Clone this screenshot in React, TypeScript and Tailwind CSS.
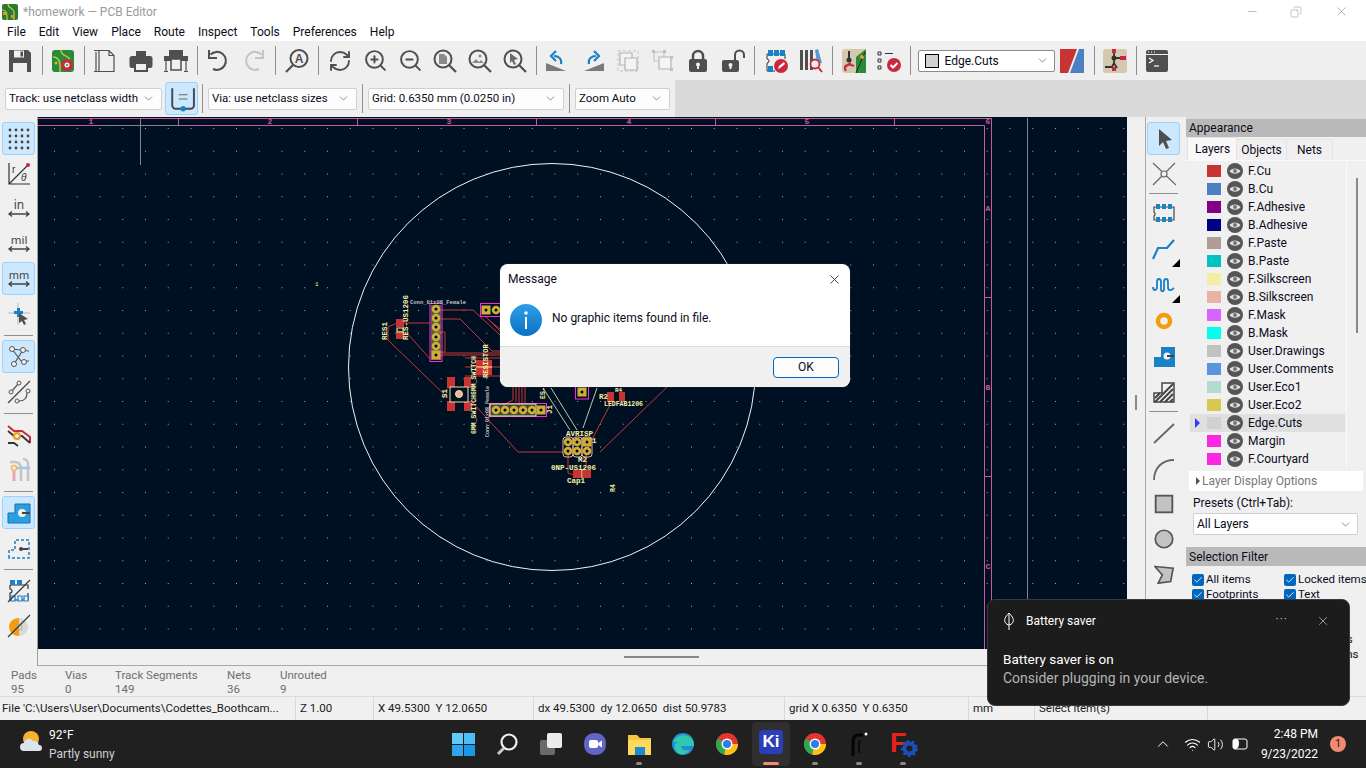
import type { ReactNode } from "react";
import { RefreshCw, ZoomIn, ZoomOut, ChevronDown, X, Check, Minus, Copy, ChevronUp, Wifi, Volume2 } from "lucide-react";

const ink = "#4f4f4f";
const blue = "#1a81c4";
const red = "#c8293f";

function Ico({ children, size = 24 }: { children: ReactNode; size?: number }) {
  return (
    <svg width={size} height={size} viewBox="0 0 24 24" fill="none">
      {children}
    </svg>
  );
}

function Btn({ children, active }: { children: ReactNode; active?: boolean }) {
  return (
    <div
      className={
        active
          ? "w-[33px] h-[33px] mx-px shrink-0 flex items-center justify-center rounded-[3px] bg-[#cce8ff] border border-[#99d1ff]"
          : "w-[35px] h-[35px] shrink-0 flex items-center justify-center"
      }
    >
      {children}
    </div>
  );
}

function Sep() {
  return <div className="w-px h-[29px] bg-[#8f8f8f] mx-[3px] shrink-0" />;
}

function VBtn({ children, active, tri }: { children: ReactNode; active?: boolean; tri?: boolean }) {
  return (
    <div
      className={
        active
          ? "relative w-[33px] h-[33px] my-px shrink-0 flex items-center justify-center rounded-[3px] bg-[#cce8ff] border border-[#99d1ff]"
          : "relative w-[33px] h-[35px] shrink-0 flex items-center justify-center"
      }
    >
      {children}
      {tri && <div className="absolute right-0 bottom-0 w-0 h-0 border-l-[8px] border-l-transparent border-b-[8px] border-b-black" />}
    </div>
  );
}

function HSep() {
  return <div className="h-px w-[29px] bg-[#8f8f8f] my-[3.5px] shrink-0" />;
}

function Select({ text, w }: { text: string; w: string }) {
  return (
    <div className={`${w} h-[22px] shrink-0 flex items-center justify-between bg-[#fdfdfd] border border-[#d0d0d0] rounded-[2px] pl-[3px] pr-[6px] text-[11.5px] text-[#0b0b20]`}>
      <span className="whitespace-nowrap">{text}</span>
      <ChevronDown size={13} strokeWidth={1.2} color="#555" />
    </div>
  );
}

const zoomProps = { size: 25, color: ink, strokeWidth: 1.9 };

function TopToolbar() {
  return (
    <div className="h-[39px] bg-[#efefef] flex items-center pl-[2px]">
      <Btn>
        <Ico>
          <path d="M1 1h19l3 3v19H1z" fill={ink} />
          <path d="M6 1.500h10v7H6z" fill="#efefef" />
          <path d="M12.500 2.500h2.500v5h-2.500z" fill={ink} />
          <path d="M5 14h14v9H5z" fill="#efefef" />
        </Ico>
      </Btn>
      <div className="w-[1.5px]" />
      <Sep />
      <Btn>
        <Ico>
          <rect x="1" y="1" width="22" height="22" rx="3" fill="#2a8a3a" />
          <path d="M10 1c0 6 5 5 8 8v3M2 8c5 0 6 3 7 7v8" stroke="#b8c840" strokeWidth="1.500" />
          <circle cx="5" cy="14" r="1.500" fill="#e0b040" />
          <circle cx="16" cy="16" r="6" fill={red} />
          <circle cx="16" cy="16" r="2.500" fill="#f4f4f4" />
          <circle cx="16" cy="16" r="1" fill="#2a8a3a" />
        </Ico>
      </Btn>
      <Sep />
      <Btn>
        <Ico>
          <path d="M6 1.500h10l5 5v16H6zM3 3v19M1 22.500h5M1 1.500h5M16 1.500v5h5" stroke={ink} strokeWidth="1.200" fill="none" />
        </Ico>
      </Btn>
      <div className="w-px" />
      <Btn>
        <Ico>
          <path d="M7 2h10v6H7z" fill={ink} />
          <rect x="0.500" y="7" width="23" height="12" rx="2.500" fill={ink} />
          <path d="M6 14h12v8H6z" fill="#efefef" stroke={ink} strokeWidth="2" />
        </Ico>
      </Btn>
      <Btn>
        <Ico>
          <path d="M5 1h14v7H5z" fill={ink} />
          <path d="M0 7h24v5H0z" fill={ink} />
          <path d="M7 10h10v11H7z" fill="#efefef" stroke={ink} strokeWidth="1.500" />
          <path d="M2 12v10M22 12v10M0 22.500h4M20 22.500h4" stroke={ink} strokeWidth="1.200" />
        </Ico>
      </Btn>
      <Sep />
      <Btn>
        <Ico>
          <path d="M4.500 5.500A9 9 0 1 1 7 20" stroke={ink} strokeWidth="2" />
          <path d="M3 1v8h8" stroke={ink} strokeWidth="2" />
        </Ico>
      </Btn>
      <div className="w-px" />
      <Btn>
        <Ico>
          <path d="M19.500 5.500A9 9 0 1 0 17 20" stroke="#c4c4c4" strokeWidth="2" />
          <path d="M21 1v8h-8" stroke="#c4c4c4" strokeWidth="2" />
        </Ico>
      </Btn>
      <Sep />
      <div className="w-px" />
      <Btn>
        <Ico>
          <circle cx="14" cy="9.500" r="8.500" stroke={ink} strokeWidth="2" />
          <path d="M8 16 1 23" stroke={ink} strokeWidth="2.200" />
          <text x="14" y="14" textAnchor="middle" fontSize="12" fontWeight="700" fontFamily="Liberation Sans" fill={ink}>A</text>
        </Ico>
      </Btn>
      <Sep />
      <div className="w-px" />
      <Btn><RefreshCw size={24} color={ink} strokeWidth={1.9} /></Btn>
      <Btn><ZoomIn {...zoomProps} /></Btn>
      <Btn><ZoomOut {...zoomProps} /></Btn>
      <Btn>
        <Ico>
          <circle cx="10" cy="10" r="8.500" stroke={ink} strokeWidth="2" />
          <path d="M16 16l7 7" stroke={ink} strokeWidth="2.200" />
          <path d="M6 5h5l3 3v7H6z" fill="#8a8a8a" />
        </Ico>
      </Btn>
      <Btn>
        <Ico>
          <circle cx="10" cy="10" r="8.500" stroke={ink} strokeWidth="2" />
          <path d="M16 16l7 7" stroke={ink} strokeWidth="2.200" />
          <path d="M4 14l4-4 3 3 2-2 3 3z" fill="#8a8a8a" />
          <circle cx="12" cy="7" r="1.500" fill="#8a8a8a" />
        </Ico>
      </Btn>
      <Btn>
        <Ico>
          <circle cx="10" cy="10" r="8.500" stroke={ink} strokeWidth="2" />
          <path d="M16 16l7 7" stroke={ink} strokeWidth="2.200" />
          <path d="M7 4l8 6-4 1 2 4-2 1-2-4-2 2z" fill="#6a6a6a" />
        </Ico>
      </Btn>
      <Sep />
      <Btn>
        <Ico>
          <path d="M1 22V14l20 8z" fill="#7a7a7a" />
          <path d="M16 15c1-5-2-8-7-8" stroke={blue} strokeWidth="2.200" />
          <path d="M11 2 6 7l5 5" stroke={blue} strokeWidth="2.200" />
        </Ico>
      </Btn>
      <div className="w-px" />
      <Btn>
        <Ico>
          <path d="M23 22V14L3 22z" fill="#7a7a7a" />
          <path d="M8 15c-1-5 2-8 7-8" stroke={blue} strokeWidth="2.200" />
          <path d="M13 2l5 5-5 5" stroke={blue} strokeWidth="2.200" />
        </Ico>
      </Btn>
      <Btn>
        <Ico>
          <path d="M2 2h20v20H2z" stroke="#c4c4c4" strokeWidth="1" strokeDasharray="3 2" />
          <path d="M4 4h12v12H4z" fill="#f4f4f4" stroke="#b4b4b4" strokeWidth="1.200" />
          <path d="M9 9h12v12H9z" fill="#f4f4f4" stroke="#b4b4b4" strokeWidth="1.200" />
        </Ico>
      </Btn>
      <Btn>
        <Ico>
          <path d="M3 3h10v9H3z" stroke="#c4c4c4" strokeWidth="1.200" />
          <path d="M8 8h12v12H8z" fill="#f4f4f4" stroke="#b4b4b4" strokeWidth="1.200" />
          <path d="M1 1h3v3H1zM12 1h3v3h-3zM19 19h3v3h-3zM19 7h3v3h-3z" fill="#c0c0c0" />
        </Ico>
      </Btn>
      <Btn>
        <Ico>
          <path d="M7 11V7a5 5 0 0 1 10 0v4" stroke={ink} strokeWidth="2.500" />
          <rect x="3" y="10" width="18" height="13" rx="2" fill={ink} />
          <circle cx="12" cy="15.500" r="2" fill="#efefef" />
          <path d="M11 16h2v4h-2z" fill="#efefef" />
        </Ico>
      </Btn>
      <Btn>
        <Ico>
          <path d="M14 11V6a4.500 4.500 0 0 1 9 0v3" stroke={ink} strokeWidth="2" />
          <rect x="1" y="11" width="17" height="12" rx="2" fill={ink} />
          <circle cx="9.500" cy="16" r="2" fill="#efefef" />
          <path d="M8.500 16h2v4h-2z" fill="#efefef" />
        </Ico>
      </Btn>
      <Sep />
      <div className="w-px" />
      <Btn>
        <Ico>
          <path d="M3 5h18v5M3 5v5a2 2 0 0 1 0 4v8h8" stroke="#333" strokeWidth="1" />
          <path d="M4 1h5v6H4zM10 1h5v6h-5zM16 1h5v6h-5zM4 17h5v6H4z" fill={blue} />
          <circle cx="17" cy="17" r="7" fill={red} />
          <path d="M14 20l1-3 5-4 1 2-5 4z" fill="#fff" />
        </Ico>
      </Btn>
      <Btn>
        <Ico>
          <path d="M1 1h3v20H1zM6 1h3v20H6zM11 1h3v20h-3z" fill={ink} />
          <path d="M16 1l3-1 4 14h-5z" fill="#5a9ad0" />
          <circle cx="16" cy="15" r="4.500" fill="#efefef" stroke={red} strokeWidth="1.800" />
          <path d="M19 18l4 5" stroke={red} strokeWidth="2" />
        </Ico>
      </Btn>
      <Sep />
      <div className="w-px" />
      <Btn>
        <Ico>
          <rect width="24" height="24" rx="3" fill="#d4c8ae" />
          <path d="M14 24V8l10-8v24z" fill="#2a8a3a" />
          <path d="M14 24 23 3" stroke="#222" strokeWidth="1" />
          <circle cx="20" cy="8" r="2" fill="#e0a030" />
          <path d="M7 2v8" stroke="#333" strokeWidth="2" />
          <circle cx="7" cy="11" r="2.500" fill="#333" />
          <path d="M4 22c-3-5 1-8 8-5M9 14l-5 3" stroke={red} strokeWidth="2.200" />
        </Ico>
      </Btn>
      <Btn>
        <Ico>
          <path d="M1 3h3v3H1zM1 10h3v3H1zM1 17h3v3H1z" stroke="#333" strokeWidth="1" />
          <path d="M8 4.500h8" stroke="#333" strokeWidth="1" />
          <circle cx="17" cy="16" r="7" fill={red} />
          <path d="M13.500 16l2.500 2.500 4.500-4.500" stroke="#fff" strokeWidth="2" />
        </Ico>
      </Btn>
      <Sep />
      <div className="w-[137px] h-[22px] shrink-0 ml-[4px] flex items-center bg-white border border-[#8a8a8a] rounded-[2px] pl-[6px] pr-[5px] text-[12px] text-[#0b0b20]">
        <div className="w-[14px] h-[14px] bg-[#d0d2cd] border border-black mr-[6px]" />
        <span className="flex-1">Edge.Cuts</span>
        <ChevronDown size={13} strokeWidth={1.2} color="#555" />
      </div>
      <div className="w-[24px] h-[24px] ml-[5px] mr-[7px] shrink-0">
        <svg width="24" height="24" viewBox="0 0 24 24">
          <path d="M0 0h17L8 24H0z" fill="#c83434" />
          <path d="M19 0h5v24H10z" fill="#4d7fc4" />
        </svg>
      </div>
      <Sep />
      <Btn>
        <Ico>
          <rect width="24" height="24" rx="3" fill="#d4c8ae" />
          <path d="M11 4v10M11 9h9M2 18h7l2-4 3 5" stroke="#333" strokeWidth="1.800" />
          <circle cx="11" cy="9" r="2.500" fill="#333" />
          <path d="M9 0h4v4H9zM17 7h6v4h-6zM9 18h4v4H9z" fill={red} />
        </Ico>
      </Btn>
      <Sep />
      <Btn>
        <Ico>
          <rect x="1" y="1" width="22" height="22" rx="2" fill={ink} />
          <path d="M1 5.500h22" stroke="#efefef" strokeWidth="1" />
          <path d="M4 9l4 2.500-4 2.500" stroke="#fff" strokeWidth="1.200" />
          <path d="M9 17h5" stroke="#fff" strokeWidth="1.200" />
          <path d="M3 3h1M6 3h1M9 3h1" stroke="#fff" strokeWidth="1" />
        </Ico>
      </Btn>
    </div>
  );
}

function SecondToolbar() {
  return (
    <div className="h-[37px] bg-[#dadada] flex">
      <div className="w-[675px] bg-[#efefef] flex items-center pl-[5px]">
        <Select text="Track: use netclass width" w="w-[157px]" />
        <div className="w-[33px] h-[33px] ml-[3px] shrink-0 flex items-center justify-center rounded-[3px] bg-[#cce8ff] border border-[#99d1ff]">
          <Ico size={26}>
            <path d="M3 2v16a3 3 0 0 0 3 3h14a3 3 0 0 0 3-3V2" stroke="#3f4a57" strokeWidth="1.800" />
            <path d="M9 8h8M9 12h8" stroke="#666" strokeWidth="1" />
            <circle cx="13" cy="21" r="2.500" fill={blue} />
          </Ico>
        </div>
        <div className="w-px h-[29px] bg-[#8f8f8f] ml-[4px] mr-[5px] shrink-0" />
        <Select text="Via: use netclass sizes" w="w-[149px]" />
        <div className="w-px h-[29px] bg-[#8f8f8f] mx-[5px] shrink-0" />
        <Select text="Grid: 0.6350 mm (0.0250 in)" w="w-[196px]" />
        <div className="w-px h-[29px] bg-[#8f8f8f] mx-[5px] shrink-0" />
        <Select text="Zoom Auto" w="w-[95px]" />
      </div>
    </div>
  );
}

function LeftToolbar() {
  return (
    <div className="w-[37px] shrink-0 bg-[#f0f0f0] flex flex-col items-center pt-[4px]">
      <VBtn active>
        <Ico>
          {[3, 9, 15, 21].map((y) => [3, 9, 15, 21].map((x) => <circle key={`${x}-${y}`} cx={x} cy={y} r="1.400" fill="#444" />))}
        </Ico>
      </VBtn>
      <VBtn>
        <Ico>
          <path d="M2 1v21h21M2 22 21 3" stroke="#333" strokeWidth="1.200" />
          <circle cx="21" cy="3" r="2" fill={red} />
          <text x="5" y="11" fontSize="10" fontFamily="Liberation Sans" fill="#333">r</text>
          <text x="14" y="19" fontSize="10" fontStyle="italic" fontFamily="Liberation Sans" fill="#333">θ</text>
        </Ico>
      </VBtn>
      <VBtn>
        <Ico>
          <text x="12" y="12" textAnchor="middle" fontSize="12" fontFamily="Noto Sans" fill="#444">in</text>
          <path d="M2 17h20M5 14.500 2 17l3 2.500M19 14.500l3 2.500-3 2.500" stroke="#444" strokeWidth="1.300" />
        </Ico>
      </VBtn>
      <VBtn>
        <Ico>
          <text x="12" y="12" textAnchor="middle" fontSize="11.500" fontFamily="Noto Sans" fill="#444">mil</text>
          <path d="M2 17h20M5 14.500 2 17l3 2.500M19 14.500l3 2.500-3 2.500" stroke="#444" strokeWidth="1.300" />
        </Ico>
      </VBtn>
      <VBtn active>
        <Ico>
          <text x="12" y="12" textAnchor="middle" fontSize="11" fontFamily="Noto Sans" fill="#444">mm</text>
          <path d="M2 17h20M5 14.500 2 17l3 2.500M19 14.500l3 2.500-3 2.500" stroke="#444" strokeWidth="1.300" />
        </Ico>
      </VBtn>
      <VBtn>
        <Ico>
          <path d="M1 11h22M11 1v22" stroke="#aaa" strokeWidth="0.800" />
          <path d="M7 9h3V6h3v3h3v3h-3v3h-3v-3H7z" fill={blue} />
          <path d="M12 11l9 6-4 1 2 4-2 1-2-4-3 2z" fill={ink} />
        </Ico>
      </VBtn>
      <HSep />
      <VBtn active>
        <Ico>
          <path d="M5 4l17 2M5 4l9 12M16 5l-9 14M14 16h8" stroke="#555" strokeWidth="1.200" />
          <circle cx="5" cy="4" r="2.500" fill="#f4f4f4" stroke="#555" />
          <circle cx="16" cy="5" r="2.500" fill="#f4f4f4" stroke="#555" />
          <circle cx="7" cy="19" r="2.500" fill="#f4f4f4" stroke="#555" />
          <circle cx="17" cy="17" r="2.500" fill="#f4f4f4" stroke="#555" />
        </Ico>
      </VBtn>
      <VBtn>
        <Ico>
          <path d="M1 23 23 1" stroke="#444" strokeWidth="1.200" />
          <path d="M5 11 11 4M12 21c5 0 8-3 8-8" stroke="#555" strokeWidth="1.200" />
          <circle cx="12" cy="3" r="2" fill="#f0f0f0" stroke="#555" />
          <circle cx="4" cy="12" r="2" fill="#f0f0f0" stroke="#555" />
          <circle cx="21" cy="11" r="2" fill="#f0f0f0" stroke="#555" />
          <circle cx="10" cy="21" r="2" fill="#f0f0f0" stroke="#555" />
        </Ico>
      </VBtn>
      <HSep />
      <VBtn>
        <Ico>
          <path d="M1 3l6 5h8l8 6v6" stroke={red} strokeWidth="2" />
          <path d="M1 8l6 5h8l8 7M1 20h6l4 3" stroke="#333" strokeWidth="1.800" />
          <circle cx="10" cy="13" r="3" fill="#f0f0f0" stroke="#ef9a10" strokeWidth="2" />
        </Ico>
      </VBtn>
      <VBtn>
        <Ico>
          <path d="M7 12v11" stroke="#e8a8a8" strokeWidth="3" />
          <path d="M14 23V10a6 6 0 0 0-6-6H3M21 23V6a5 5 0 0 0-5-5" stroke="#c4c4c4" strokeWidth="2.500" />
          <path d="M7 10h16" stroke="#9cc8e8" strokeWidth="2.500" />
          <circle cx="7" cy="10" r="2.500" fill="#f0f0f0" stroke="#f0b860" strokeWidth="1.500" />
        </Ico>
      </VBtn>
      <HSep />
      <VBtn active>
        <Ico>
          <path d="M1 22V12h7V3h15v19z" fill="#2a9fe0" stroke="#1a6fa8" strokeWidth="1" />
          <circle cx="15" cy="12" r="4" fill="#f0f0f0" />
          <path d="M15 12h8" stroke="#444" strokeWidth="2" />
        </Ico>
      </VBtn>
      <VBtn>
        <Ico>
          <path d="M2 22v-8h6V4h14v18z" stroke={blue} strokeWidth="1.500" strokeDasharray="3 2" />
          <circle cx="14" cy="13" r="2" fill="#444" />
          <path d="M14 13h7" stroke="#444" strokeWidth="2" />
        </Ico>
      </VBtn>
      <HSep />
      <VBtn>
        <Ico>
          <path d="M3 6h18v4M3 6v4a2 2 0 0 1 0 4v7h18v-7" stroke="#333" strokeWidth="1.200" />
          <path d="M3 1h5v5H3zM10 1h5v5h-5z" fill={blue} />
          <path d="M4 17h4v5H4zM11 17h4v5h-4zM17 17h4v5h-4z" fill="#f0f0f0" stroke={blue} strokeWidth="1.200" />
          <path d="M1 23 23 1" stroke="#333" strokeWidth="1.100" />
        </Ico>
      </VBtn>
      <VBtn>
        <Ico>
          <circle cx="11" cy="13" r="9" fill="#f59b0c" />
          <path d="M12 4a9 9 0 0 1 0 18z" fill="#d8d8d8" />
          <circle cx="12" cy="13" r="3" fill="none" stroke="#aaa" />
          <path d="M1 23 23 1" stroke="#333" strokeWidth="1.100" />
        </Ico>
      </VBtn>
    </div>
  );
}

function RightToolbar() {
  return (
    <div className="w-[38px] shrink-0 bg-[#f0f0f0] border-l border-[#a8a8a8] flex flex-col items-start pl-px pt-[4px] mr-[3px]">
      <VBtn active>
        <Ico>
          <path d="M7 2l13 11-6 1 3 7-3 1-3-7-4 4z" fill={ink} />
        </Ico>
      </VBtn>
      <VBtn>
        <Ico>
          <path d="M1 1l23 22M23 1 1 23" stroke="#666" strokeWidth="1.200" />
          <circle cx="12" cy="12" r="3" fill="#f0f0f0" stroke="#666" strokeWidth="1.200" />
        </Ico>
      </VBtn>
      <div className="h-px w-[29px] ml-[2px] bg-[#8f8f8f] mt-[2px] mb-px shrink-0" />
      <VBtn>
        <Ico>
          <path d="M2 6h20v13H2v-4a2.500 2.500 0 0 0 0-4z" stroke="#444" strokeWidth="1.200" />
          <path d="M4 3h4v5H4zM10 3h4v5h-4zM16 3h4v5h-4zM4 16h4v5H4zM10 16h4v5h-4zM16 16h4v5h-4z" fill={blue} />
        </Ico>
      </VBtn>
      <div className="h-[2px]" />
      <VBtn tri>
        <Ico>
          <path d="M1 21 6 10h9l7-8" stroke={blue} strokeWidth="2.200" />
        </Ico>
      </VBtn>
      <div className="h-px" />
      <VBtn tri>
        <Ico>
          <path d="M1 13c0 4 4 4 4 0V8c0-4 4-4 4 0v7c0 3 3 3 3 0V8c0-4 4-4 4 0v5c0 4 3 4 6 1" stroke={blue} strokeWidth="1.800" />
        </Ico>
      </VBtn>
      <VBtn>
        <Ico size={18}>
          <circle cx="12" cy="12" r="8" stroke="#f59b0c" strokeWidth="6" />
        </Ico>
      </VBtn>
      <VBtn>
        <Ico>
          <path d="M2 23V13h7V3h14v20z" fill={blue} />
          <circle cx="15" cy="12" r="3.500" fill="#f0f0f0" />
          <path d="M15 12h7" stroke="#444" strokeWidth="2" />
        </Ico>
      </VBtn>
      <div className="h-px" />
      <VBtn>
        <Ico>
          <path d="M2 22V13h8V3h12v19z" fill="#f0f0f0" stroke="#444" strokeWidth="1.500" />
          <path d="M3 18 8 13M3 22 21 4M8 22 21 9M13 22l8-8M18 22l3-3" stroke="#444" strokeWidth="2" />
        </Ico>
      </VBtn>
      <div className="h-px w-[29px] ml-[2px] bg-[#8f8f8f] mt-[2px] mb-[3px] shrink-0" />
      <VBtn>
        <Ico>
          <path d="M2 22 22 3" stroke="#666" strokeWidth="1.800" />
        </Ico>
      </VBtn>
      <div className="h-px" />
      <VBtn>
        <Ico>
          <path d="M2 23C2 11 10 3 22 3" stroke="#666" strokeWidth="1.800" />
        </Ico>
      </VBtn>
      <VBtn>
        <Ico size={20}>
          <rect x="2" y="2" width="20" height="20" fill="#c2c2c2" stroke="#555" strokeWidth="2.200" />
        </Ico>
      </VBtn>
      <VBtn>
        <Ico size={20}>
          <circle cx="12" cy="12" r="10.500" fill="#c2c2c2" stroke="#555" strokeWidth="2" />
        </Ico>
      </VBtn>
      <VBtn>
        <Ico size={20}>
          <path d="M1 3l22 2-3 16-15 2 5-10z" fill="#c2c2c2" stroke="#555" strokeWidth="2" />
        </Ico>
      </VBtn>
    </div>
  );
}

function Pad({ x, y, square }: { x: number; y: number; square?: boolean }) {
  return (
    <g>
      {square ? <rect x={x - 4.500} y={y - 4.500} width="9" height="9" fill="#cfae38" /> : <circle cx={x} cy={y} r="4.300" fill="#cfae38" />}
      <circle cx={x} cy={y} r="1.500" fill="#02060e" />
    </g>
  );
}

function SilkText({ x, y, t, rot, color = "#f6f1a6", size = 7.500 }: { x: number; y: number; t: string; rot?: boolean; color?: string; size?: number }) {
  return (
    <text
      x={x}
      y={y}
      fontSize={size}
      fontWeight="700"
      fontFamily="Liberation Mono"
      fill={color}
      transform={rot ? `rotate(-90 ${x} ${y})` : undefined}
    >
      {t}
    </text>
  );
}

function Canvas() {
  const tracks = [
    "M441 310h32l27 25",
    "M441 319h19l32 32h8",
    "M441 353h59M441 355h59",
    "M396 323h34",
    "M396 330l12 4 22 25",
    "M397 323l-9 4v13l60 58",
    "M472 402l46 50h45",
    "M600 452l67-65",
    "M588 447l22-42",
    "M513 387v13l-10 5M516 387v15M519 387v18M522 387v18M525 387v16",
    "M568 455v18l6 2",
    "M586 455v12l-4 4",
    "M465 367h35M465 358h35M465 376h35",
    "M435 332h10v20h-6",
    "M490 321l10 8M486 317l14 14",
  ];
  return (
    <div className="flex-1 bg-[#001023] min-h-0">
      <svg width="1089" height="532" viewBox="38 117 1089 532" className="block">
        <defs>
          <pattern id="griddots" x="54" y="128" width="22.75" height="22.75" patternUnits="userSpaceOnUse">
            <rect width="1" height="1" fill="#a8a8a8" />
          </pattern>
        </defs>
        <rect x="38" y="117" width="1089" height="532" fill="url(#griddots)" />
        {/* page frame */}
        <path d="M38 118.500h953.500V649M38 125.500h946.500V649" stroke="#c85aa0" fill="none" />
        <path d="M178.500 118v7M357.500 118v7M536.500 118v7M715.500 118v7M894.500 118v7M985 297.500h6M985 476.500h6" stroke="#c85aa0" />
        {[["1", 91], ["2", 270], ["3", 449], ["4", 629], ["5", 807], ["6", 988]].map(([t, x]) => (
          <text key={t} x={x} y="124" textAnchor="middle" fontSize="8" fontWeight="700" fontFamily="Liberation Mono" fill="#c85aa0">{t}</text>
        ))}
        {[["A", 211], ["B", 390], ["C", 569]].map(([t, y]) => (
          <text key={t} x="988" y={y} textAnchor="middle" fontSize="8" fontWeight="700" fontFamily="Liberation Mono" fill="#c85aa0">{t}</text>
        ))}
        {/* cursor */}
        <path d="M140.500 118v47M100 125.500h80M1027.500 118v531" stroke="#84848a" />
        <circle cx="552" cy="367" r="203.500" stroke="#f2f2f2" fill="none" />
        <text x="315" y="286" fontSize="6" fontFamily="Liberation Mono" fill="#f2eda1">1</text>

        {tracks.map((d) => (
          <path key={d} d={d} stroke="#c83434" fill="none" strokeWidth="1" />
        ))}
        <path d="M543 388l27 42M551 388l26 42M597 388l-14 40" stroke="#b8c8b0" fill="none" />

        {/* J3 header */}
        <rect x="430" y="303.500" width="12" height="58" fill="none" stroke="#ff26e2" />
        <rect x="431" y="305" width="10" height="55" fill="#f2eda1" opacity="0.35" />
        {[309, 318, 327, 337, 346].map((y) => <Pad key={y} x={436} y={y} />)}
        <Pad x={436} y={355} square />
        {/* J top */}
        <rect x="480.500" y="303.500" width="20" height="13" fill="none" stroke="#ff26e2" />
        <Pad x={486} y={310} square />
        <Pad x={496} y={310} />
        {/* J1 */}
        <rect x="489.500" y="403.500" width="57" height="13" fill="none" stroke="#ff26e2" />
        <rect x="490" y="404" width="46" height="12" fill="#f2eda1" fillOpacity="0.25" stroke="#f2eda1" />
        {[496, 505, 514, 523, 532].map((x) => <Pad key={x} x={x} y={410} />)}
        <Pad x={541} y={410} square />
        {/* J2 */}
        <rect x="575.500" y="386" width="13" height="13" fill="none" stroke="#ff26e2" />
        <Pad x={582} y={392} square />
        {/* AVRISP */}
        <rect x="563" y="437" width="10" height="20" rx="3" fill="none" stroke="#e8b2a7" />
        <rect x="573" y="437" width="9" height="20" rx="3" fill="none" stroke="#e8b2a7" />
        <rect x="582" y="437" width="10" height="20" rx="3" fill="none" stroke="#e8b2a7" />
        <Pad x={568} y={442} />
        <Pad x={577} y={442} />
        <Pad x={587} y={442} square />
        <Pad x={568} y={451} />
        <Pad x={577} y={451} />
        <Pad x={587} y={451} />
        {/* red parts */}
        <rect x="396" y="319" width="8" height="8" fill="#c83434" />
        <rect x="396" y="332" width="8" height="7" fill="#c83434" />
        <rect x="397" y="328" width="6" height="4" fill="none" stroke="#f2eda1" />
        <rect x="447" y="377" width="8" height="11" fill="#c83434" />
        <rect x="464" y="377" width="7" height="11" fill="#c83434" />
        <rect x="447" y="401" width="8" height="10" fill="#c83434" />
        <rect x="464" y="401" width="7" height="10" fill="#c83434" />
        <rect x="450" y="387" width="18" height="15" fill="#00101f" stroke="#f2dcb0" />
        <circle cx="459" cy="394" r="3.500" fill="#e8b2a7" stroke="#f2eda1" />
        <rect x="476" y="360" width="16" height="15" fill="#c83434" />
        <path d="M476 367h16" stroke="#f2eda1" />
        <rect x="607" y="392" width="7" height="10" fill="#c83434" />
        <rect x="619" y="392" width="6" height="9" fill="#c83434" />
        <rect x="573" y="470" width="9" height="8" fill="#c83434" />
        <rect x="583" y="470" width="8" height="8" fill="#c83434" />
        <path d="M582 469v9" stroke="#f2eda1" />
        {/* silk */}
        <SilkText x={387} y={340} t="RES1" rot />
        <SilkText x={408} y={340} t="RES-US1206" rot />
        <SilkText x={410} y={304} t="Conn_01x06_Female" color="#c2c2c2" size={5.500} />
        <SilkText x={476} y={434} t="6MM_SWITCH6MM_SWITCH" rot size={6.500} />
        <SilkText x={489} y={437} t="Conn_01x08_Female" rot color="#c2c2c2" size={5} />
        <SilkText x={488} y={378} t="RESISTOR" rot size={7} />
        <SilkText x={447} y={398} t="S1" rot />
        <SilkText x={552} y={414} t="J1" rot />
        <SilkText x={566} y={436} t="AVRISP" />
        <SilkText x={592} y={443} t="1" />
        <SilkText x={578} y={462} t="M2" />
        <SilkText x={551} y={470} t="0NP-US1206" />
        <SilkText x={567} y={483} t="Cap1" />
        <SilkText x={615} y={492} t="R4" rot size={6.500} />
        <SilkText x={599} y={399} t="R2" />
        <SilkText x={604} y={406} t="LEDFAB1206" size={6.500} />
        <SilkText x={615} y={392} t="R4" size={6} />
        <SilkText x={545} y={399} t="ES-U" rot size={6.500} />
      </svg>
    </div>
  );
}

function Eye() {
  return (
    <svg width="16" height="16" viewBox="0 0 16 16" className="shrink-0">
      <circle cx="8" cy="8" r="8" fill="#555" />
      <path d="M2.500 8C5 4.500 11 4.500 13.500 8 11 11.500 5 11.500 2.500 8z" fill="#e4e4e4" />
      <circle cx="8" cy="8" r="2" fill="#777" />
    </svg>
  );
}

const layers = [
  ["F.Cu", "#c83434"],
  ["B.Cu", "#4d7fc4"],
  ["F.Adhesive", "#840084"],
  ["B.Adhesive", "#000084"],
  ["F.Paste", "#b09c94"],
  ["B.Paste", "#00c2c2"],
  ["F.Silkscreen", "#f2eda1"],
  ["B.Silkscreen", "#e8b2a7"],
  ["F.Mask", "#d864ff"],
  ["B.Mask", "#02ffee"],
  ["User.Drawings", "#c2c2c2"],
  ["User.Comments", "#5994dc"],
  ["User.Eco1", "#b4dbd2"],
  ["User.Eco2", "#d8c852"],
  ["Edge.Cuts", "#d0d2cd"],
  ["Margin", "#ff26e2"],
  ["F.Courtyard", "#ff26e2"],
];

const filters = [
  ["All items", "Locked items"],
  ["Footprints", "Text"],
  ["Tracks", "Vias"],
  ["Pads", "Graphics"],
  ["Zones", "Rule Areas"],
  ["Other items", "Dimensions"],
];

function Checked({ label }: { label: string }) {
  return (
    <div className="flex items-center gap-[2px] h-[15px] w-[92px] shrink-0 text-[11.5px]">
      <div className="w-[12px] h-[12px] bg-[#0067c0] rounded-[2px] flex items-center justify-center">
        <Check size={10} color="#fff" strokeWidth={2} />
      </div>
      <span className="whitespace-nowrap">{label}</span>
    </div>
  );
}

function RightPanel() {
  return (
    <div className="w-[180px] shrink-0 bg-[#f0f0f0] flex flex-col text-[12px] text-[#0b0b20] overflow-hidden">
      <div className="h-[2px] bg-[#dadada]" />
      <div className="h-[18px] bg-[#b9b9b9] pl-[3px] flex items-center">Appearance</div>
      <div className="h-[23px] flex items-end pl-[1px]">
        <div className="w-[50px] h-[23px] bg-[#f8f8f8] border border-b-0 border-[#e4e4e4] pl-[7px] flex items-center">Layers</div>
        <div className="w-[50px] h-[21px] border border-b-0 border-l-0 border-[#e4e4e4] flex items-center justify-center">Objects</div>
        <div className="w-[46px] h-[21px] border border-b-0 border-l-0 border-[#e4e4e4] flex items-center justify-center">Nets</div>
      </div>
      <div className="h-[308px] border-t border-[#fafafa] flex pl-[4px]">
        <div className="w-[155px] pt-px">
          {layers.map(([name, color]) => (
            <div key={name} className={name === "Edge.Cuts" ? "h-[18px] flex items-center bg-[#e0e0e0]" : "h-[18px] flex items-center"}>
              <div className="w-[17px] flex justify-center shrink-0">
                {name === "Edge.Cuts" && <div className="w-0 h-0 ml-[-2px] border-y-[5px] border-y-transparent border-l-[5px] border-l-[#3a3aff]" />}
              </div>
              <div className="w-[14px] h-[12px] shrink-0" style={{ backgroundColor: color }} />
              <div className="w-[6px] shrink-0" />
              <Eye />
              <span className="ml-[5px]">{name}</span>
            </div>
          ))}
        </div>
        <div className="w-[1px] ml-[1px] bg-[#fafafa]" />
        <div className="flex-1 flex justify-center pt-[17px]">
          <div className="w-[2px] h-[155px] bg-[#8a8a8a]" />
        </div>
      </div>
      <div className="h-[20px] mt-[3px] bg-white text-[#777] pl-[7px] flex items-center gap-[2px] ml-[3px] mr-[3px]">
        <div className="w-0 h-0 border-y-[4px] border-y-transparent border-l-[4px] border-l-[#555]" />
        Layer Display Options
      </div>
      <div className="pl-[7px] pt-[2px] h-[21px] mt-[1px]">Presets (Ctrl+Tab):</div>
      <div className="ml-[7px] w-[165px] h-[22px] bg-white border border-[#d0d0d0] rounded-[2px] flex items-center justify-between pl-[3px] pr-[5px]">
        All Layers
        <ChevronDown size={13} strokeWidth={1.2} color="#555" />
      </div>
      <div className="h-[12px]" />
      <div className="h-[19px] bg-[#b9b9b9] pl-[3px] flex items-center">Selection Filter</div>
      <div className="pl-[6px] pt-[6px]">
        {filters.map(([a, b]) => (
          <div key={a} className="flex">
            <Checked label={a} />
            <Checked label={b} />
          </div>
        ))}
      </div>
    </div>
  );
}

function Dialog() {
  return (
    <div className="absolute left-[500px] top-[264px] w-[350px] h-[123px] bg-white rounded-[8px] overflow-hidden text-[12px] text-[#0b0b20] flex flex-col shadow-[0_0_1px_#666]">
      <div className="h-[30px] flex items-center justify-between pl-[8px] pr-[8px]">
        Message
        <X size={15} strokeWidth={1.300} color="#222" />
      </div>
      <div className="h-[52px] flex items-center pl-[10px] gap-[10px]">
        <div className="w-[32px] h-[32px] rounded-full bg-linear-to-b from-[#2ea0e6] to-[#0a70c4] flex items-center justify-center text-white">
          <svg width="6" height="20" viewBox="0 0 6 20">
            <circle cx="3" cy="3" r="1.800" fill="#fff" />
            <path d="M2 7h2v12H2z" fill="#fff" />
          </svg>
        </div>
        <span className="mb-[5px]">No graphic items found in file.</span>
      </div>
      <div className="flex-1 bg-[#f0f0f0] border-t border-[#dcdcdc] flex items-center justify-end pr-[11px]">
        <div className="w-[66px] h-[21px] bg-[#fdfdfd] border border-[#0067c0] rounded-[4px] flex items-center justify-center">OK</div>
      </div>
    </div>
  );
}

function Toast() {
  return (
    <div className="absolute left-[987px] top-[599px] w-[363px] h-[107px] rounded-[8px] bg-[#1c1c1c] border border-[#3a3a3a] text-white pl-[15px] pr-[19px] pt-[13px]">
      <div className="flex items-center h-[16px] text-[12px]">
        <svg width="12" height="19" viewBox="0 0 12 19" fill="none" className="mr-[11px]">
          <path d="M6 1C2 5 1 8 2 10c1 2 3 3 4 3s3-1 4-3c1-2 0-5-4-9zM6 1v17" stroke="#fff" strokeWidth="1" />
        </svg>
        <span className="flex-1">Battery saver</span>
        <span className="mr-[28px] text-[#bbb] tracking-[1px] mb-[4px]">···</span>
        <X size={14} strokeWidth={1.100} color="#ddd" />
      </div>
      <div className="mt-[21px] text-[13.5px] leading-[18px]">Battery saver is on</div>
      <div className="text-[14px] leading-[20px] text-[#b4b4b4]">Consider plugging in your device.</div>
    </div>
  );
}

function ChromeIcon() {
  return (
    <svg width="24" height="24" viewBox="0 0 24 24">
      <circle cx="12" cy="12" r="11" fill="#e2352b" />
      <path d="M12 12 2.500 6.500A11 11 0 0 0 9 22.600z" fill="#2da94f" />
      <path d="M12 12h11a11 11 0 0 1-14 10.600z" fill="#fbc116" />
      <circle cx="12" cy="12" r="5.500" fill="#fff" />
      <circle cx="12" cy="12" r="4" fill="#2b7de9" />
    </svg>
  );
}

function TaskIcon({ children, dot, active }: { children: ReactNode; dot?: boolean; active?: boolean }) {
  return (
    <div className={active ? "relative w-[38px] h-[44px] mx-[3px] shrink-0 flex items-center justify-center bg-[#2f2f2f] rounded-[4px]" : "relative w-[38px] h-[44px] mx-[3px] shrink-0 flex items-center justify-center"}>
      {children}
      {dot && <div className="absolute bottom-[1px] w-[6px] h-[3px] rounded-full bg-[#8a8a8a]" />}
      {active && <div className="absolute bottom-[1px] w-[16px] h-[3px] rounded-full bg-[#f08a70]" />}
    </div>
  );
}

function Taskbar() {
  return (
    <div className="relative h-[48px] bg-[#202020] flex items-center text-white text-[12px]">
      <div className="absolute left-[19px] top-[10px]">
        <svg width="24" height="24" viewBox="0 0 24 24">
          <circle cx="12" cy="9" r="8" fill="#f7b32b" />
          <path d="M5 21a4 4 0 0 1 0-8 5 5 0 0 1 9-2 5 5 0 0 1 6 4 3 3 0 0 1 0 6z" fill="#d9e4ef" />
        </svg>
      </div>
      <div className="absolute left-[49px] top-[6px] leading-[19px]">
        <div>92°F</div>
        <div className="text-[#d0d0d0]">Partly sunny</div>
      </div>
      <div className="flex items-center ml-[441px]">
        <TaskIcon>
          <svg width="23" height="23" viewBox="0 0 23 23">
            <path d="M0 0h11v11H0z" fill="#5ecbfa" />
            <path d="M12 0h11v11H12z" fill="#4cbdf5" />
            <path d="M0 12h11v11H0z" fill="#2fa6ec" />
            <path d="M12 12h11v11H12z" fill="#1c97e6" />
          </svg>
        </TaskIcon>
        <TaskIcon>
          <svg width="24" height="24" viewBox="0 0 24 24" fill="none">
            <circle cx="14" cy="10" r="7.500" stroke="#f2f2f2" strokeWidth="2.200" />
            <path d="M9 16l-6 6" stroke="#c8c8c8" strokeWidth="3" />
          </svg>
        </TaskIcon>
        <TaskIcon>
          <svg width="24" height="24" viewBox="0 0 24 24">
            <rect x="1" y="8" width="15" height="15" rx="2" fill="#6a6a6a" />
            <rect x="8" y="1" width="15" height="15" rx="2" fill="#ececec" />
          </svg>
        </TaskIcon>
        <TaskIcon>
          <svg width="24" height="24" viewBox="0 0 24 24">
            <path d="M12 1c7 0 11 4 11 11s-4 11-11 11S1 19 1 12 5 1 12 1z" fill="#6264c8" />
            <rect x="6" y="8" width="9" height="8" rx="2" fill="#fff" />
            <path d="M15 11l4-2.500v7L15 13z" fill="#fff" />
          </svg>
        </TaskIcon>
        <TaskIcon dot>
          <svg width="25" height="24" viewBox="0 0 25 24">
            <path d="M1 3h9l3 3h11v17H1z" fill="#f8c63d" />
            <path d="M1 8h23v15H1z" fill="#fcd95c" />
            <path d="M8 15h10v8H8z" fill="#1d8ad8" />
          </svg>
        </TaskIcon>
        <TaskIcon>
          <svg width="24" height="24" viewBox="0 0 24 24">
            <circle cx="12" cy="12" r="11" fill="#1d8ed8" />
            <path d="M2 10C4 4 13 1 19 5c3 2 4 5 4 9H10c0 3 3 5 9 4-3 4-9 6-12 3-3-2-4-6-3-9 2-2 3-2 6-2z" fill="#30c8b0" />
          </svg>
        </TaskIcon>
        <TaskIcon><ChromeIcon /></TaskIcon>
        <TaskIcon active>
          <div className="w-[24px] h-[24px] rounded-[4px] bg-[#2b3eb8] flex items-center justify-center text-[17px] font-bold font-['Liberation_Sans'] text-white mb-[4px]">Ki</div>
        </TaskIcon>
        <TaskIcon dot><ChromeIcon /></TaskIcon>
        <TaskIcon dot>
          <svg width="22" height="26" viewBox="0 0 22 26" fill="none">
            <path d="M5 25V10c0-3 2-6 5-6h5M5 25V12" stroke="#050505" strokeWidth="3" />
            <path d="M11 22V12c0-2 1-2 2-2" stroke="#050505" strokeWidth="1.500" />
            <circle cx="18" cy="3" r="1.500" fill="#fff" />
          </svg>
        </TaskIcon>
        <TaskIcon dot>
          <div className="relative w-[26px] h-[26px]">
            <span className="absolute left-0 top-[-3px] text-[27px] font-bold font-['Liberation_Sans'] text-[#e8231a] leading-[30px]">F</span>
            <svg width="17" height="17" viewBox="0 0 17 17" className="absolute right-[-2px] bottom-0">
              <circle cx="8.500" cy="8.500" r="5" fill="none" stroke="#1c50b8" strokeWidth="4" />
              <circle cx="8.500" cy="8.500" r="7" fill="none" stroke="#1c50b8" strokeWidth="3" strokeDasharray="2.500 2.500" />
            </svg>
          </div>
        </TaskIcon>
      </div>
      <div className="flex-1" />
      <div className="flex items-center mr-[20px]">
        <ChevronUp size={18} strokeWidth={1.300} color="#fff" className="mr-[12px]" />
        <Wifi size={17} strokeWidth={1.500} color="#fff" className="mr-[6px]" />
        <Volume2 size={17} strokeWidth={1.300} color="#fff" className="mr-[8px]" />
        <svg width="17" height="12" viewBox="0 0 17 12" fill="none" className="mr-[12px]">
          <rect x="1" y="1" width="14" height="10" rx="2" stroke="#fff" />
          <path d="M5 1h-2a2 2 0 0 0-2 2v6a2 2 0 0 0 2 2c3 0 4-3 4-6 0-2-1-4-2-4z" fill="#fff" />
        </svg>
        <div className="text-right leading-[20px] mr-[12px]">
          <div>2:48 PM</div>
          <div>9/23/2022</div>
        </div>
        <div className="w-[16px] h-[16px] rounded-full bg-[#f08a70] text-[#202020] text-[11px] flex items-center justify-center">1</div>
      </div>
    </div>
  );
}

const stats = [
  ["Pads", "95", "w-[54px]"],
  ["Vias", "0", "w-[50px]"],
  ["Track Segments", "149", "w-[112px]"],
  ["Nets", "36", "w-[53px]"],
  ["Unrouted", "9", "w-[60px]"],
];

const statusCells = [
  ["File 'C:\\Users\\User\\Documents\\Codettes_Boothcam...", "w-[296px] pl-[2px]"],
  ["Z 1.00", "w-[78px] pl-[4px]"],
  ["X 49.5300  Y 12.0650", "w-[160px] pl-[4px]"],
  ["dx 49.5300  dy 12.0650  dist 50.9783", "w-[251px] pl-[4px]"],
  ["grid X 0.6350  Y 0.6350", "w-[184px] pl-[4px]"],
  ["mm", "w-[66px] pl-[4px]"],
  ["Select item(s)", "w-[173px] pl-[4px]"],
];

export default function App() {
  return (
    <div className="relative w-[1366px] h-[768px] overflow-hidden bg-[#f0f0f0] font-['Roboto',sans-serif]">
      {/* title bar */}
      <div className="h-[23px] bg-white flex items-center text-[12px] text-[#9a9a9a]">
        <svg width="16" height="16" viewBox="0 0 16 16" className="ml-[2px] mr-[5px]">
          <rect width="16" height="16" rx="2" fill="#2a7a32" />
          <path d="M6 0c0 5 5 3 6 8v8M0 6c4 0 5 3 5 6v4" stroke="#c8d040" strokeWidth="1.200" fill="none" />
          <rect x="1" y="8" width="3" height="3" fill="#e89020" />
          <rect x="9" y="11" width="3" height="3" fill="#e89020" />
        </svg>
        <span>*homework — PCB Editor</span>
        <div className="flex-1" />
        <Minus size={13} strokeWidth={1} color="#888" className="mr-[31px]" />
        <Copy size={12} strokeWidth={1} color="#888" className="mr-[32px] -scale-x-100" />
        <X size={15} strokeWidth={1} color="#888" className="mr-[17px]" />
      </div>
      {/* menu */}
      <div className="h-[18px] bg-white flex items-center gap-[13px] pl-[7px] text-[12px] text-[#0b0b20]">
        {["File", "Edit", "View", "Place", "Route", "Inspect", "Tools", "Preferences", "Help"].map((m) => (
          <span key={m}>{m}</span>
        ))}
      </div>
      <TopToolbar />
      <SecondToolbar />
      <div className="h-[549px] flex">
        <LeftToolbar />
        <div className="w-px bg-[#a0a0a0] shrink-0" />
        <div className="flex-1 flex flex-col border-b border-[#a8a8a8]">
          <div className="h-[532px] flex">
            <Canvas />
            <div className="w-[18px] bg-[#f0f0f0] shrink-0 relative">
              <div className="absolute left-[8px] top-[278px] w-[2px] h-[15px] bg-[#888]" />
            </div>
          </div>
          <div className="flex-1 bg-[#f0f0f0] flex items-center pl-[586px]">
            <div className="w-[75px] h-[2px] bg-[#888]" />
          </div>
        </div>
        <RightToolbar />
        <RightPanel />
      </div>
      {/* messages */}
      <div className="h-[31px] bg-[#f0f0f0] flex pl-[11px] text-[11.5px] leading-[14px] text-[#6e6e6e] pt-[2px] border-b border-[#dcdcdc]">
        {stats.map(([a, b, w]) => (
          <div key={a} className={w}>
            <div>{a}</div>
            <div>{b}</div>
          </div>
        ))}
      </div>
      {/* status bar */}
      <div className="h-[23px] bg-[#f0f0f0] flex text-[11.5px] text-[#1a1a1a] items-center">
        {statusCells.map(([t, w]) => (
          <div key={t} className={`${w} h-full flex items-center border-r border-[#d8d8d8] whitespace-pre overflow-hidden`}>
            {t}
          </div>
        ))}
      </div>
      <Taskbar />
      <Dialog />
      <Toast />
    </div>
  );
}
